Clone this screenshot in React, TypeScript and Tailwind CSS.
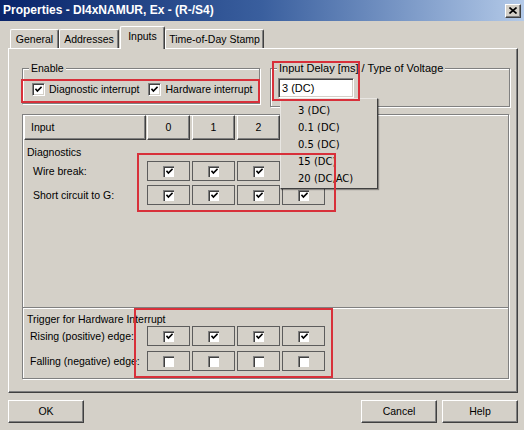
import React from 'react';

// Windows-classic style dialog: "Properties - DI4xNAMUR, Ex - (R-/S4)"

const raised =
  'bg-[#d4d0c8] border-t border-l border-t-white border-l-white border-r border-b border-r-[#404040] border-b-[#404040] shadow-[inset_-1px_-1px_0_#808080]';
const etched = 'border border-[#808080] shadow-[inset_1px_1px_0_#fff,1px_1px_0_#fff]';

function Check() {
  return (
    <svg width="7" height="7" viewBox="0 0 7 7">
      <polyline points="0.4,2.8 2.4,5 6.6,0.8" fill="none" stroke="#000" strokeWidth="1.7" />
    </svg>
  );
}

function CheckBox({ checked }: { checked: boolean }) {
  return (
    <span className="w-[13px] h-[13px] bg-white border-t border-l border-t-[#808080] border-l-[#808080] border-r border-b border-r-white border-b-white shadow-[inset_1px_1px_0_#404040,inset_-1px_-1px_0_#d4d0c8] flex items-center justify-center shrink-0">
      {checked && <Check />}
    </span>
  );
}

function Cell({ checked }: { checked: boolean }) {
  return (
    <div className="w-[43px] h-[20px] ml-[2px] first:ml-0 border border-[#5c5c5c] flex items-center justify-center">
      <span className="w-[11px] h-[11px] bg-white border-t border-l border-t-[#808080] border-l-[#808080] shadow-[inset_1px_1px_0_#404040] flex items-center justify-center">
        {checked && <Check />}
      </span>
    </div>
  );
}

function Row({ label, values, indent, className }: { label: string; values: boolean[]; indent: string; className: string }) {
  return (
    <div className={`flex items-center ${className}`}>
      <div className={`w-[124px] whitespace-nowrap ${indent}`}>{label}</div>
      <div className="flex">
        {values.map((v, i) => (
          <Cell key={i} checked={v} />
        ))}
      </div>
    </div>
  );
}

export default function App() {
  const tabs = [
    { label: 'General', w: 'w-[49px]' },
    { label: 'Addresses', w: 'w-[60px]' },
    { label: 'Inputs', w: 'w-[45px] ml-[1px]', active: true },
    { label: 'Time-of-Day Stamp', w: 'w-[99px]' },
  ];
  const delays = ['3 (DC)', '0.1 (DC)', '0.5 (DC)', '15 (DC)', '20 (DC,AC)'];

  return (
    <div className="relative w-[524px] h-[430px] overflow-hidden bg-[#d4d0c8] text-[10.5px] leading-[13px] text-black whitespace-nowrap font-['Liberation_Sans',Arial,sans-serif]">
      {/* title bar */}
      <div className="h-[21px] flex items-center pl-[3px] pr-[3px] bg-linear-to-r from-[#0a246a] via-[#3a5f9e] to-[#b4cae8]">
        <span className="text-white font-bold text-[12px]">Properties - DI4xNAMUR, Ex - (R-/S4)</span>
        <button className={`ml-auto w-[16px] h-[14px] flex items-center justify-center ${raised}`}>
          <svg width="8" height="7" viewBox="0 0 8 7">
            <path d="M0.5 0.5 L7.5 6.5 M7.5 0.5 L0.5 6.5" stroke="#000" strokeWidth="1.6" />
          </svg>
        </button>
      </div>

      {/* tabs */}
      <div className="mt-[5px] h-[22px] pl-[10px] flex items-end relative z-10">
        {tabs.map((t) =>
          t.active ? (
            <div
              key={t.label}
              className={`${t.w} h-[23px] -mb-[1px] bg-[#d4d0c8] border-t border-l border-white border-r border-r-[#404040] shadow-[inset_-1px_0_0_#808080] rounded-t-[2px] flex items-start justify-center pt-[3px]`}
            >
              {t.label}
            </div>
          ) : (
            <div
              key={t.label}
              className={`${t.w} h-[19px] border-t border-l border-white border-r border-r-[#404040] shadow-[inset_-1px_0_0_#808080] rounded-t-[2px] flex items-center justify-center`}
            >
              {t.label}
            </div>
          )
        )}
      </div>

      {/* tab panel */}
      <div className={`ml-[8px] w-[510px] h-[345px] pl-[13px] ${raised}`}>
        <div className="flex items-start mt-[19px]">
          {/* Enable group */}
          <div className={`relative w-[238px] h-[36px] ${etched}`}>
            <span className="absolute -top-[7px] left-[6px] px-[2px] bg-[#d4d0c8]">Enable</span>
            <div className="flex items-center mt-[14px] pl-[9px]">
              <CheckBox checked />
              <span className="ml-[4px]">Diagnostic interrupt</span>
              <span className="ml-[9px]">
                <CheckBox checked />
              </span>
              <span className="ml-[4px]">Hardware interrupt</span>
            </div>
          </div>

          {/* Input delay group */}
          <div className={`relative ml-[10px] w-[240px] h-[39px] ${etched}`}>
            <span className="absolute -top-[7px] left-[6px] px-[2px] bg-[#d4d0c8] text-[11px]">Input Delay [ms] / Type of Voltage</span>
            <div className="mt-[9px] ml-[7px] w-[76px] h-[20px] bg-white border-t border-l border-t-[#808080] border-l-[#808080] border-r border-b border-r-white border-b-white shadow-[inset_1px_1px_0_#404040,inset_-1px_-1px_0_#d4d0c8] flex items-center pl-[3px] text-[11px]">
              3 (DC)
            </div>
          </div>
        </div>

        {/* table box */}
        <div className={`mt-[7px] w-[487px] h-[265px] ${etched}`}>
          <div className="h-[192px]">
            <div className="flex ml-[1px]">
              <div className={`w-[122px] h-[25px] flex items-center pl-[6px] ${raised}`}>Input</div>
              <div className="flex ml-[1px]">
                {['0', '1', '2', '3'].map((n, i) => (
                  <div key={n} className={`w-[43px] h-[25px] flex items-center justify-center ${i ? 'ml-[2px]' : ''} ${raised}`}>
                    {n}
                  </div>
                ))}
              </div>
            </div>
            <div className="mt-[6px] pl-[4px]">Diagnostics</div>
            <Row label="Wire break:" values={[true, true, true, true]} indent="pl-[10px]" className="mt-[2px]" />
            <Row label="Short circuit to G:" values={[true, true, true, true]} indent="pl-[10px]" className="mt-[4px]" />
          </div>
          <div className="h-[1px] bg-[#808080]" />
          <div className="h-[1px] bg-white" />
          <div className="mt-[4px] pl-[4px]">Trigger for Hardware Interrupt</div>
          <Row label="Rising (positive) edge:" values={[true, true, true, true]} indent="pl-[7px]" className="" />
          <Row label="Falling (negative) edge:" values={[false, false, false, false]} indent="pl-[7px]" className="mt-[5px]" />
        </div>
      </div>

      {/* buttons */}
      <div className="mt-[7px] flex pl-[8px] pr-[6px]">
        <button className={`w-[76px] h-[23px] ${raised}`}>OK</button>
        <button className={`ml-auto w-[76px] h-[23px] ${raised}`}>Cancel</button>
        <button className={`ml-[5px] w-[76px] h-[23px] ${raised}`}>Help</button>
      </div>

      {/* open drop-down list */}
      <div className="absolute left-[280px] top-[98px] w-[98px] h-[91px] bg-[#d4d0c8] border border-t-[#e8e6e2] border-l-[#e8e6e2] border-r-[#404040] border-b-[#404040] shadow-[1px_1px_1px_rgba(0,0,0,0.35)] pt-[3px] pl-[17px] font-['DejaVu_Sans',Verdana,sans-serif] text-[10px] leading-[17px]">
        {delays.map((d) => (
          <div key={d}>{d}</div>
        ))}
      </div>

      {/* red annotation frames */}
      <div className="absolute left-[21px] top-[79px] w-[239px] h-[24px] border-2 border-[#d8303a]" />
      <div className="absolute left-[272px] top-[61px] w-[88px] h-[40px] border-2 border-[#d8303a]" />
      <div className="absolute left-[137px] top-[153px] w-[199px] h-[59px] border-2 border-[#d8303a]" />
      <div className="absolute left-[134px] top-[308px] w-[199px] h-[70px] border-2 border-[#d8303a]" />
    </div>
  );
}
